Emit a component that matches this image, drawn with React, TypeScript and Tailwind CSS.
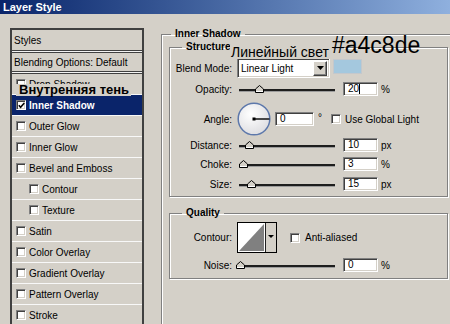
import { FunctionComponent } from "react";

const sunken =
  "border border-t-[#808080] border-l-[#808080] border-r-white border-b-white shadow-[inset_1px_1px_0_#404040,inset_-1px_-1px_0_#d4d0c8]";

const Check = ({ checked }: { checked?: boolean }) => (
  <span className={`w-[10px] h-[10px] shrink-0 bg-white flex items-center justify-center ${sunken}`}>
    {checked && (
      <svg width="7" height="7" viewBox="0 0 7 7">
        <path d="M0.8 3.2 L2.6 5.2 L6.3 1" stroke="#000" strokeWidth="1.6" fill="none" />
      </svg>
    )}
  </span>
);

const Thumb = ({ left }: { left: number }) => (
  <svg className="absolute bottom-0" style={{ left }} width="9" height="8" viewBox="0 0 9 8">
    <polygon points="0.5,7.5 0.5,4 4.5,0.5 8.5,4 8.5,7.5" fill="#d4d0c8" stroke="#000" />
    <line x1="1" y1="6.5" x2="8" y2="6.5" stroke="#fff" />
  </svg>
);

const Slider = ({ className, pos }: { className: string; pos: number }) => (
  <div className={`relative h-[8px] shrink-0 ${className}`}>
    <div className="absolute left-[1px] right-0 bottom-[1px] h-[3px] border-t-2 border-[#1e1e1e] bg-[#9c9c9c]" />
    <Thumb left={pos - 4} />
  </div>
);

const Field = ({ value, className = "w-[35px]", caret }: { value: string; className?: string; caret?: boolean }) => (
  <div className={`h-[14px] shrink-0 bg-white pl-[4px] flex items-center leading-[12px] ${className} ${sunken}`}>
    {value}
    {caret && <span className="inline-block w-px h-[10px] bg-black" />}
  </div>
);

const Label = ({ children }: { children: string }) => (
  <div className="w-[62px] shrink-0 text-right">{children}</div>
);

const styleRows = [
  { label: "Drop Shadow" },
  { label: "Inner Shadow", checked: true, active: true },
  { label: "Outer Glow" },
  { label: "Inner Glow" },
  { label: "Bevel and Emboss" },
  { label: "Contour", indent: true },
  { label: "Texture", indent: true },
  { label: "Satin" },
  { label: "Color Overlay" },
  { label: "Gradient Overlay" },
  { label: "Pattern Overlay" },
  { label: "Stroke" },
];

const App: FunctionComponent = () => {
  return (
    <div className="relative w-[450px] h-[324px] overflow-hidden bg-[#d4d0c8] font-['Liberation_Sans',Arial,sans-serif] text-[10px] text-black">
      <div className="h-[14px] bg-linear-to-r from-[#0a246a] to-[#8fb0de] pl-[3px] text-[11px] font-bold leading-[14px] text-white">
        Layer Style
      </div>

      <div className="flex flex-row items-start">
        {/* style list */}
        <div className="shrink-0 ml-[10px] mt-[14px] w-[134px] h-[300px] border-x-2 border-t-2 border-[#404040]">
          <div className="h-[20px] flex items-center pl-[2px]">Styles</div>
          <div className="h-[3px] border-y border-[#404040] bg-[#f4f4f4]" />
          <div className="h-[18px] flex items-center pl-[2px]">Blending Options: Default</div>
          <div className="h-[3px] border-y border-[#404040] bg-[#f4f4f4]" />
          {styleRows.map((r) => (
            <div
              key={r.label}
              className={`h-[21px] flex items-center gap-[3px] border-b border-[#f8f8f8] ${r.indent ? "pl-[17px]" : "pl-[4px]"} ${r.active ? "bg-[#0a246a] text-white font-bold" : ""}`}
            >
              <Check checked={r.checked} />
              <span>{r.label}</span>
            </div>
          ))}
        </div>

        {/* settings */}
        <fieldset className="shrink-0 ml-[17px] mt-[14px] w-[300px] h-[320px] border border-[#808080] shadow-[inset_1px_1px_0_#fff,1px_1px_0_#fff] px-[7px]">
          <legend className="ml-[2px] px-[4px] font-bold leading-[12px]">Inner Shadow</legend>

          <fieldset className="mt-[1px] w-[279px] border border-[#808080] shadow-[inset_1px_1px_0_#fff,1px_1px_0_#fff] pb-[5px]">
            <legend className="ml-[12px] px-[4px] font-bold leading-[12px]">Structure</legend>

            <div className="mt-[5px] h-[20px] flex items-center">
              <Label>Blend Mode:</Label>
              <div className={`shrink-0 ml-[5px] w-[93px] h-[20px] bg-white flex items-center justify-between pl-[3px] pr-[2px] ${sunken}`}>
                <span>Linear Light</span>
                <span className="w-[14px] h-[15px] bg-[#d4d0c8] border border-t-white border-l-white border-r-[#404040] border-b-[#404040] shadow-[inset_-1px_-1px_0_#808080] flex items-center justify-center">
                  <svg width="7" height="4" viewBox="0 0 7 4">
                    <polygon points="0,0 7,0 3.5,4" fill="#000" />
                  </svg>
                </span>
              </div>
              <div className="shrink-0 ml-[3px] self-start mt-[1px] w-[29px] h-[15px] bg-[#a4c8de] border border-[#c4c8cc]" />
            </div>

            <div className="mt-[4px] h-[14px] flex items-center">
              <Label>Opacity:</Label>
              <Slider className="ml-[6px] w-[97px]" pos={21} />
              <Field value="20" className="ml-[8px] w-[35px]" caret />
              <span className="ml-[3px]">%</span>
            </div>

            <div className="mt-[6px] h-[34px] flex items-center">
              <Label>Angle:</Label>
              <svg className="ml-[5px] shrink-0" width="34" height="34" viewBox="0 0 34 34">
                <defs>
                  <radialGradient id="dial" cx="40%" cy="35%" r="70%">
                    <stop offset="0%" stopColor="#ffffff" />
                    <stop offset="100%" stopColor="#dcdce0" />
                  </radialGradient>
                </defs>
                <circle cx="17" cy="17" r="15.8" fill="url(#dial)" stroke="#5d78ab" strokeWidth="1.5" />
                <line x1="17" y1="17" x2="32.5" y2="17" stroke="#000" strokeWidth="1.4" />
                <rect x="15.5" y="15.5" width="3" height="3" fill="#000" />
              </svg>
              <Field value="0" className="ml-[4px] w-[39px]" />
              <span className="ml-[4px] self-start mt-[8px]">°</span>
              <span className="ml-[9px]">
                <Check />
              </span>
              <span className="ml-[4px] whitespace-nowrap">Use Global Light</span>
            </div>

            <div className="mt-[2px] h-[14px] flex items-center">
              <Label>Distance:</Label>
              <Slider className="ml-[6px] w-[97px]" pos={11} />
              <Field value="10" className="ml-[8px] w-[35px]" />
              <span className="ml-[3px]">px</span>
            </div>

            <div className="mt-[5px] h-[14px] flex items-center">
              <Label>Choke:</Label>
              <Slider className="ml-[6px] w-[97px]" pos={4.5} />
              <Field value="3" className="ml-[8px] w-[35px]" />
              <span className="ml-[3px]">%</span>
            </div>

            <div className="mt-[6px] h-[14px] flex items-center">
              <Label>Size:</Label>
              <Slider className="ml-[6px] w-[97px]" pos={13} />
              <Field value="15" className="ml-[8px] w-[35px]" />
              <span className="ml-[3px]">px</span>
            </div>
          </fieldset>

          <fieldset className="mt-[10px] w-[279px] border border-[#808080] shadow-[inset_1px_1px_0_#fff,1px_1px_0_#fff] pb-[6px]">
            <legend className="ml-[12px] px-[4px] font-bold leading-[12px]">Quality</legend>

            <div className="mt-[3px] h-[31px] flex items-center">
              <Label>Contour:</Label>
              <svg className="ml-[5px] shrink-0" width="40" height="31" viewBox="0 0 40 31">
                <rect x="0.5" y="0.5" width="39" height="30" fill="#fff" stroke="#000" />
                <polygon points="2,29 27,2 27,29" fill="#808080" />
                <rect x="28" y="1" width="11" height="29" fill="#d4d0c8" />
                <line x1="28.5" y1="1" x2="28.5" y2="30" stroke="#202020" />
                <polygon points="31,13 37,13 34,16" fill="#000" />
              </svg>
              <span className="ml-[13px]">
                <Check />
              </span>
              <span className="ml-[5px]">Anti-aliased</span>
            </div>

            <div className="mt-[5px] h-[14px] flex items-center">
              <Label>Noise:</Label>
              <Slider className="ml-[3px] w-[100px]" pos={4.5} />
              <Field value="0" className="ml-[8px] w-[35px]" />
              <span className="ml-[3px]">%</span>
            </div>
          </fieldset>
        </fieldset>
      </div>

      {/* annotations */}
      <div className="absolute left-[16px] top-[84px] h-[12px] pl-[3px] pr-[2px] bg-[#d4d0c8] text-[13px] font-bold leading-[12px]">
        Внутренняя тень
      </div>
      <div className="absolute left-[230px] top-[45px] pl-px pr-[3px] bg-[#d4d0c8] text-[14px] leading-[14px]">
        Линейный свет
      </div>
      <div className="absolute left-[332px] top-[34px] text-[23px] leading-[23px]">
        #a4c8de
      </div>
    </div>
  );
};

export default App;
